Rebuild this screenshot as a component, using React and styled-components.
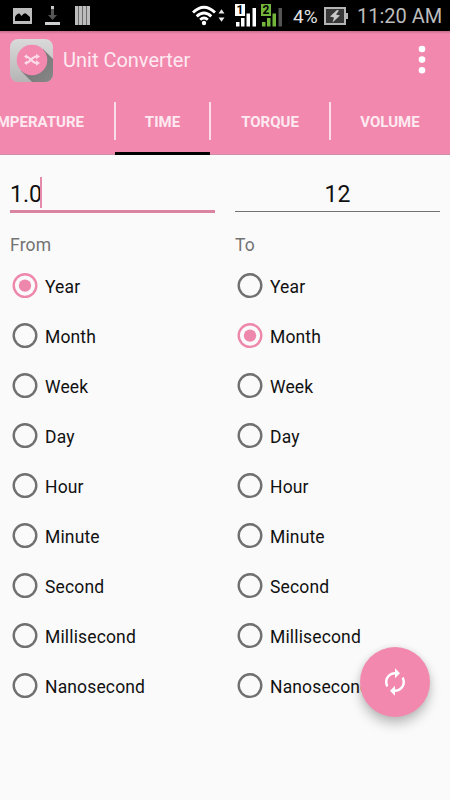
import React from 'react'
import styled, { createGlobalStyle } from 'styled-components'
import { MdAutorenew } from 'react-icons/md'

const pink = '#f388ae'

const GlobalStyle = createGlobalStyle`
    * {
        box-sizing: border-box;
    }
    body {
        margin: 0;
        background-color: #fafafa;
        font-family: Roboto, sans-serif;
    }
`

const Screen = styled.div`
    position: relative;
    width: 450px;
    height: 800px;
    overflow: hidden;
    background-color: #fafafa;
`

const StatusBar = styled.div`
    display: flex;
    align-items: center;
    height: 31px;
    padding: 0 8px 0 13px;
    background-color: black;
`

const StatusIcon = styled.svg`
    flex: none;
    display: block;
    margin-left: ${props => props.$gap || 0}px;
`

const StatusText = styled.span`
    flex: none;
    width: ${props => props.$width}px;
    margin-left: ${props => props.$gap}px;
    padding-top: 1px;
    color: ${props => props.$color};
    font-size: ${props => props.$size}px;
    line-height: 31px;
    white-space: nowrap;
`

const AppBar = styled.header`
    height: 124px;
    background-color: ${pink};
    background-image: linear-gradient(rgba(110, 60, 80, 0.35), transparent 3px);
    border-bottom: 1px solid #cb8fa6;
`

const Toolbar = styled.div`
    display: flex;
    align-items: center;
    height: 58px;
    padding: 0 24px 0 10px;
`

const Title = styled.h1`
    flex: 1;
    margin: 0 0 0 10px;
    color: #fdeaf1;
    font-size: 20px;
    font-weight: 400;
`

const TabBar = styled.nav`
    display: flex;
    justify-content: flex-end;
    height: 66px;
    overflow: hidden;
`

const Tab = styled.div`
    position: relative;
    flex: none;
    width: ${props => props.$width}px;
    padding-top: 13px;
    border-bottom: 3px solid ${props => props.$active ? 'black' : 'transparent'};
    color: #fdeaf1;
    font-size: 15px;
    font-weight: 700;
    line-height: 41px;
    text-align: center;
`

const TabDivider = styled.span`
    position: absolute;
    top: 13px;
    right: -1px;
    width: 2px;
    height: 38px;
    background-color: #fbdde8;
`

const Columns = styled.main`
    display: grid;
    grid-template-columns: 205px 205px;
    column-gap: 20px;
    padding: 17px 10px 0;
`

const Field = styled.div`
    display: flex;
    align-items: center;
    justify-content: ${props => props.$centered ? 'center' : 'flex-start'};
    height: 39px;
    padding-top: 7px;
    color: #111;
    font-size: 23px;
    line-height: 32px;
`

const Underline = styled.div`
    height: ${props => props.$focused ? 3 : 1}px;
    margin: ${props => props.$focused ? '-1px 0 0' : '0 0 1px'};
    background-color: ${props => props.$focused ? '#da84a2' : '#727272'};
`

const Caret = styled.span`
    width: 2px;
    height: 31px;
    margin: 0 0 6px -2px;
    background-color: #e58aab;
`

const Label = styled.div`
    height: 48px;
    padding-top: 20px;
    color: #737373;
    font-size: 17.5px;
    line-height: 24px;
    letter-spacing: 0.2px;
`

const Option = styled.div`
    display: flex;
    align-items: center;
    height: 50px;
    color: #111;
    font-size: 17.5px;
    letter-spacing: 0.15px;
`

const OptionName = styled.span`
    padding-top: 2px;
`

const RadioRing = styled.svg`
    display: block;
    margin: 0 7px 0 2px;
    color: ${props => props.$checked ? '#ed87ab' : '#707070'};
`

const Fab = styled.button`
    position: absolute;
    left: 360px;
    top: 647px;
    display: flex;
    align-items: center;
    justify-content: center;
    width: 70px;
    height: 70px;
    padding: 0;
    border: 0;
    border-radius: 50%;
    color: white;
    background-color: ${pink};
    box-shadow: 0 7px 12px rgba(0, 0, 0, 0.24), 0 0 6px rgba(0, 0, 0, 0.08);
`

const tabs = [
    { name: 'TEMPERATURE', width: 167 },
    { name: 'TIME', width: 95 },
    { name: 'TORQUE', width: 120 },
    { name: 'VOLUME', width: 120 },
]

const units = ['Year', 'Month', 'Week', 'Day', 'Hour', 'Minute', 'Second', 'Millisecond', 'Nanosecond']

const PictureIcon = () => (
    <StatusIcon width="19" height="16" viewBox="0 0 19 16">
        <rect width="19" height="16" fill="#bdbdbd" />
        <path d="M2 13V9q2-4 4.500-3.500L8.500 8q3-4 5-2L17 9v4z" fill="black" />
    </StatusIcon>
)

const DownloadIcon = () => (
    <StatusIcon $gap={13} width="15" height="19" viewBox="0 0 15 19">
        <path d="M6 3h3v6h3l-4.500 5L3 9h3z" fill="#555" />
        <rect x="6" y="0" width="3" height="3" fill="#c9c9c9" />
        <rect y="16" width="15" height="3" fill="#d0d0d0" />
    </StatusIcon>
)

const BarsIcon = () => (
    <StatusIcon $gap={15} width="15" height="19" viewBox="0 0 15 19">
        <rect width="15" height="19" fill="#6a6a6a" />
        <path d="M0 0h3v19H0zM4 0h3v19H4zM8 0h3v19H8zM12 0h3v19h-3z" fill="#bcbcbc" />
    </StatusIcon>
)

const WifiIcon = () => (
    <StatusIcon $gap={102} width="34" height="21" viewBox="0 0 34 21">
        <g fill="none" stroke="white" strokeWidth="2.900">
            <path d="M1 7.500Q12 -3 23 7.500" />
            <path d="M4.700 11.300Q12 4.700 19.300 11.300" />
            <path d="M8.200 14.800Q12 11.300 15.800 14.800" />
        </g>
        <circle cx="12" cy="18" r="2.200" fill="white" />
        <path d="M26.500 8.500h6L29.500 4.200zM26.500 12.500h6l-3 4.300z" fill="#e8e8e8" />
    </StatusIcon>
)

const SignalIcon = ({ sim, color, weak, gap }) => (
    <StatusIcon $gap={gap} width="22" height="23" viewBox="0 0 22 23">
        <rect width="10" height="12" fill={color} />
        <text x="5" y="10.300" fontSize="12" fontWeight="700" textAnchor="middle" fill="black">{sim}</text>
        <path d="M1 18h3.500v4.500H1zM6 14h3.500v8.500H6zM11.500 9.500H15v13h-3.500z" fill={color} />
        <path d="M17.500 4H21v18.500h-3.500z" fill={weak ? '#555' : color} />
    </StatusIcon>
)

const BatteryIcon = () => (
    <StatusIcon $gap={5} width="24" height="18" viewBox="0 0 24 18">
        <rect x="1" y="1" width="20" height="16" fill="#383838" stroke="#b5b5b5" strokeWidth="2" />
        <rect x="22" y="6" width="2" height="6" fill="#b5b5b5" />
        <path d="M13 3L6 9.500l4 1L8.500 15.500 16 8.500l-4-1L15 3.500z" fill="#c9c9c9" />
    </StatusIcon>
)

const AppLogo = () => (
    <svg width="43" height="43" viewBox="0 0 43 43">
        <defs>
            <linearGradient id="tile" x1="0" y1="0" x2="0" y2="1">
                <stop offset="0" stopColor="#dadada" />
                <stop offset="1" stopColor="#b5b5b5" />
            </linearGradient>
            <linearGradient id="shade" x1="0" y1="0" x2="1" y2="1">
                <stop offset="0" stopColor="#6e6e6e" />
                <stop offset="1" stopColor="#8d8d8d" />
            </linearGradient>
            <clipPath id="tileShape"><rect width="43" height="43" rx="8" /></clipPath>
        </defs>
        <g clipPath="url(#tileShape)">
            <rect width="43" height="43" fill="url(#tile)" />
            <path d="M33 10L50 27V50H29L11 32z" fill="url(#shade)" />
        </g>
        <circle cx="22" cy="21" r="15.300" fill={pink} />
        <g fill="none" stroke="#fbdce7" strokeWidth="2">
            <path d="M16 17.500c4 0 6 6.500 10 6.500h1" />
            <path d="M16 24c4 0 6-6.500 10-6.500h1" />
        </g>
        <path d="M26 14.700l4 2.800-4 2.800zM26 21.200l4 2.800-4 2.800zM17 15.200l-3 2.300 3 2.300zM17 21.700L14 24l3 2.300z" fill="#fbdce7" />
    </svg>
)

const OverflowIcon = () => (
    <svg width="8" height="30" viewBox="0 0 8 30">
        <circle cx="4" cy="4" r="3.300" fill="white" />
        <circle cx="4" cy="14.600" r="3.300" fill="white" />
        <circle cx="4" cy="25.200" r="3.300" fill="white" />
    </svg>
)

const Radio = ({ checked }) => (
    <RadioRing $checked={checked} width="26" height="26" viewBox="0 0 26 26">
        <circle cx="13" cy="12.600" r="11.300" fill="none" stroke="currentColor" strokeWidth="2.400" />
        {checked ? <circle cx="13" cy="12.600" r="6.200" fill="currentColor" /> : null}
    </RadioRing>
)

const UnitList = ({ label, selected }) => (
    <div>
        <Label>{label}</Label>
        {units.map(unit => (
            <Option key={unit}>
                <Radio checked={unit === selected} />
                <OptionName>{unit}</OptionName>
            </Option>
        ))}
    </div>
)

const App = () => (
    <Screen>
        <GlobalStyle />
        <StatusBar>
            <PictureIcon />
            <DownloadIcon />
            <BarsIcon />
            <WifiIcon />
            <SignalIcon sim="1" color="white" gap={9} />
            <SignalIcon sim="2" color="#72b63c" weak gap={4} />
            <StatusText $width={26} $gap={10} $size={19} $color="#e2e2e2">4%</StatusText>
            <BatteryIcon />
            <StatusText $width={86} $gap={9} $size={20} $color="#bcbcbc">11:20 AM</StatusText>
        </StatusBar>
        <AppBar>
            <Toolbar>
                <AppLogo />
                <Title>Unit Converter</Title>
                <OverflowIcon />
            </Toolbar>
            <TabBar>
                {tabs.map((tab, i) => (
                    <Tab key={tab.name} $width={tab.width} $active={tab.name === 'TIME'}>
                        {tab.name}
                        {i < tabs.length - 1 ? <TabDivider /> : null}
                    </Tab>
                ))}
            </TabBar>
        </AppBar>
        <Columns>
            <div>
                <Field>1.0<Caret /></Field>
                <Underline $focused />
            </div>
            <div>
                <Field $centered>12</Field>
                <Underline />
            </div>
            <UnitList label="From" selected="Year" />
            <UnitList label="To" selected="Month" />
        </Columns>
        <Fab><MdAutorenew size={30} /></Fab>
    </Screen>
)

export default App
